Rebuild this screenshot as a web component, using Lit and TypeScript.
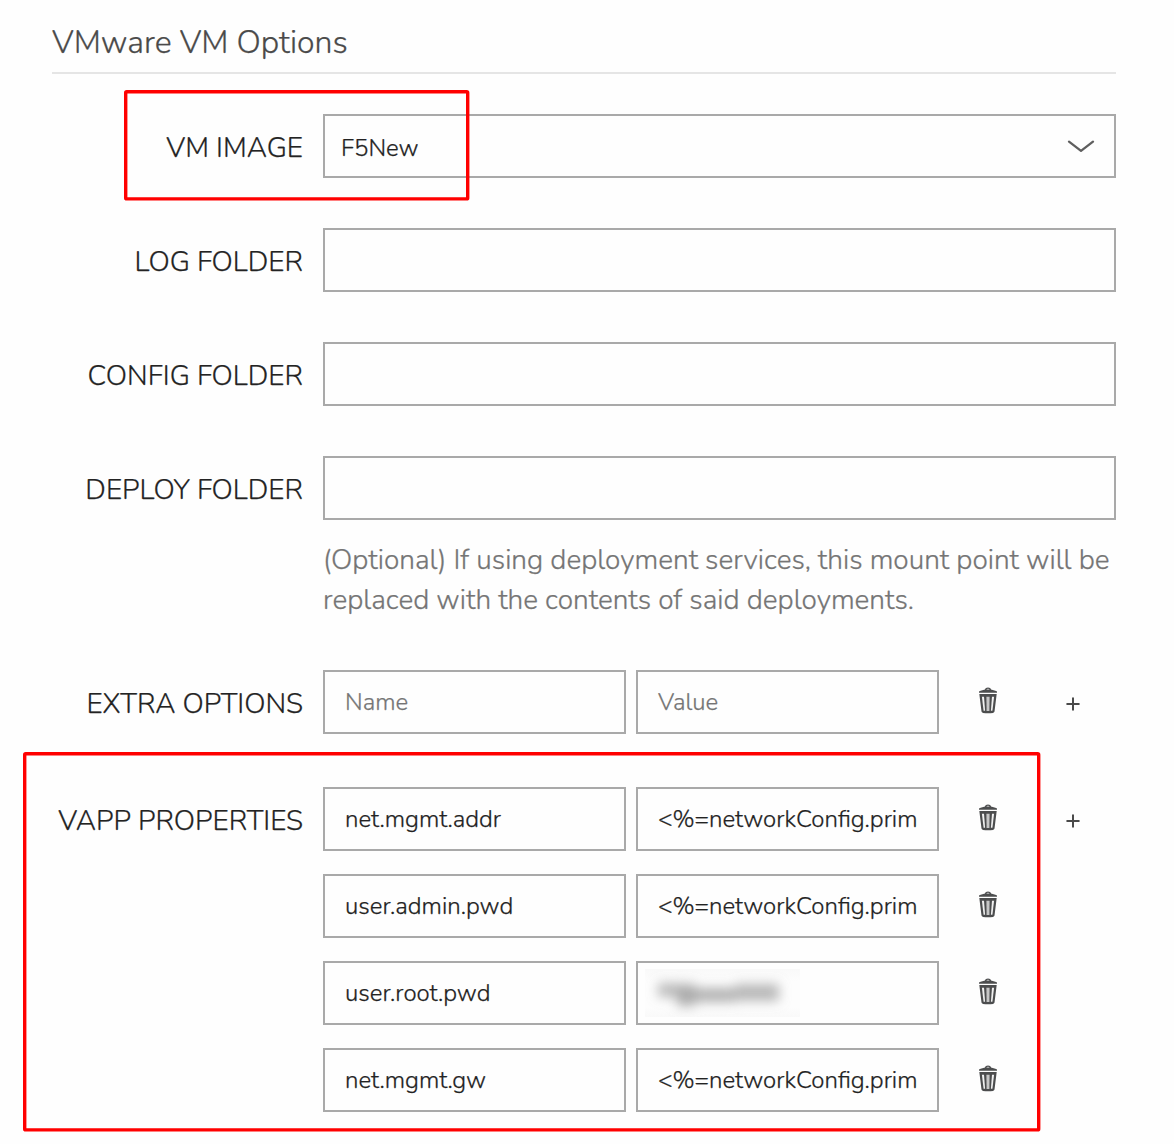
import { LitElement, html, css, svg, nothing } from "lit";
import { customElement, property } from "lit/decorators.js";

type Property = { name: string; value?: string; hidden?: boolean };

const vappProperties: Property[] = [
  { name: "net.mgmt.addr", value: "<%=networkConfig.prim" },
  { name: "user.admin.pwd", value: "<%=networkConfig.prim" },
  { name: "user.root.pwd", hidden: true },
  { name: "net.mgmt.gw", value: "<%=networkConfig.prim" },
];

const trashIcon = html`<svg width="18" height="27" viewBox="0 0 18 27" fill="#4c4d4e">
  <path d="M0 5.8V4.6Q0.1 4.1 1.6 3.7L6 2.6V2.2Q6.3 0.5 9 0.5T12 2.2V2.6L16.4 3.7Q17.9 4.1 18 4.6V5.8ZM7.4 2.4H10.6Q10.3 1.7 9 1.7T7.4 2.4Z" fill-rule="evenodd" />
  <path d="M0.3 7H17.7L15.5 24.6Q15.3 25.6 14 25.9Q9 26.8 4 25.9Q2.7 25.6 2.5 24.6Z" />
  <path d="M2.9 9.8H5L6.1 23.8H4.6Z" fill="#f0f0f0" />
  <path d="M7.4 9.8H10.6L10.4 24H7.6Z" fill="#c6c6c6" />
  <path d="M15.1 9.8H13L11.9 23.8H13.4Z" fill="#f0f0f0" />
</svg>`;

const plusIcon = html`<svg width="14" height="14" viewBox="0 0 14 14" stroke="#4a4a4a" stroke-width="2" stroke-linecap="round">
  <path d="M7 1.2V12.8M1.2 7H12.8" />
</svg>`;

const chevronIcon = html`<svg width="28" height="14" viewBox="0 0 28 14" fill="none" stroke="#5f5f5f" stroke-width="2.3" stroke-linecap="round" stroke-linejoin="round">
  <path d="M2 2.6L14 11.8L26 2.6" />
</svg>`;

/* Obscured secret: a smear of grey with no readable characters. */
const redaction = html`<svg class="redaction" width="155" height="48" viewBox="0 0 155 48">
  <defs>
    <filter id="smear" x="-30%" y="-100%" width="160%" height="300%"><feGaussianBlur stdDeviation="6" /></filter>
    <linearGradient id="veil" x1="0" y1="0" x2="0" y2="1">
      <stop offset="0" stop-color="#f9f9f9" /><stop offset="0.25" stop-color="#fdfdfd" />
      <stop offset="0.8" stop-color="#fdfdfd" /><stop offset="1" stop-color="#f9f9f9" />
    </linearGradient>
  </defs>
  <rect width="155" height="48" fill="url(#veil)" />
  ${svg`<g filter="url(#smear)" fill="#8d8d8d">
    <rect x="13" y="14" width="19" height="14" opacity="0.6" />
    <rect x="32" y="15" width="18" height="22" opacity="0.72" />
    <rect x="50" y="19" width="40" height="14" opacity="0.68" />
    <rect x="90" y="15" width="44" height="17" opacity="0.62" />
  </g>`}
</svg>`;

@customElement("option-row")
class OptionRow extends LitElement {
  @property() label = "";

  static styles = css`
    :host { display: flex; align-items: flex-start; }
    .label {
      flex: none; width: 251px; margin-right: 20px; padding-top: 14px;
      text-align: right; white-space: nowrap; line-height: 40px; color: #232323;
    }
    .control { flex: 1; min-width: 0; }
  `;

  render() {
    return html`<div class="label">${this.label}</div><div class="control"><slot></slot></div>`;
  }
}

@customElement("app-root")
class AppRoot extends LitElement {
  static styles = css`
    :host {
      display: block; position: relative; box-sizing: border-box;
      height: 1144px; overflow: hidden; padding: 21px 58px 0 52px; background: #fefefe;
      font-family: Nunito, Lato, "Open Sans", sans-serif; font-weight: 300; font-size: 28px;
      -webkit-text-stroke-width: 0.25px;
    }
    svg { display: block; flex: none; }
    h2 {
      margin: 0 0 40px; padding-bottom: 7px; border-bottom: 2px solid #e5e5e5;
      font-size: 32px; font-weight: 300; line-height: 44px; color: #4a4a4a;
    }
    .rows { display: flex; flex-direction: column; gap: 50px; }
    .vapp { margin-top: 3px; }
    .field {
      box-sizing: border-box; height: 64px; border: 2px solid #a9a9a9; padding: 0 20px;
      font-size: 24px; line-height: 60px; color: #232323; white-space: nowrap; overflow: hidden;
    }
    .select { display: flex; justify-content: space-between; align-items: center; padding: 0 19px 0 16px; }
    .selected { padding-top: 3px; }
    .help { margin-top: 20px; line-height: 40px; color: #757575; white-space: nowrap; }
    .pairs { display: flex; flex-direction: column; gap: 23px; }
    .pair { display: flex; align-items: center; }
    .pair .field { width: 303px; flex: none; }
    .pair .field + .field { margin-left: 10px; }
    .placeholder { color: #757575; }
    .hidden { padding: 6px 7px; }
    .trash { margin: 0 69px 3px 40px; }
    .plus { margin-top: 4px; }
    .highlights { position: absolute; left: 0; top: 0; }
  `;

  private pair(p: Property, first: boolean, placeholder = false) {
    const tone = placeholder ? "placeholder" : "";
    return html`<div class="pair">
      <div class="field ${tone}">${p.name}</div>
      ${p.hidden
        ? html`<div class="field hidden">${redaction}</div>`
        : html`<div class="field ${tone}">${p.value}</div>`}
      <div class="trash">${trashIcon}</div>
      ${first ? html`<div class="plus">${plusIcon}</div>` : nothing}
    </div>`;
  }

  render() {
    return html`
      <h2>VMware VM Options</h2>
      <div class="rows">
        <option-row label="VM IMAGE">
          <div class="field select"><span class="selected">F5New</span>${chevronIcon}</div>
        </option-row>
        <option-row label="LOG FOLDER"><div class="field"></div></option-row>
        <option-row label="CONFIG FOLDER"><div class="field"></div></option-row>
        <option-row label="DEPLOY FOLDER">
          <div class="field"></div>
          <div class="help">
            (Optional) If using deployment services, this mount point will be<br />replaced with the contents of said deployments.
          </div>
        </option-row>
        <option-row label="EXTRA OPTIONS">
          ${this.pair({ name: "Name", value: "Value" }, true, true)}
        </option-row>
        <option-row class="vapp" label="VAPP PROPERTIES">
          <div class="pairs">${vappProperties.map((p, i) => this.pair(p, i === 0))}</div>
        </option-row>
      </div>
      <svg class="highlights" width="1174" height="1144" fill="none" stroke="#ff0000" stroke-width="3.4">
        <rect x="125.7" y="91.7" width="342" height="107.2" rx="1" />
        <rect x="24.7" y="753.7" width="1014" height="376.2" rx="1" />
      </svg>
    `;
  }
}
